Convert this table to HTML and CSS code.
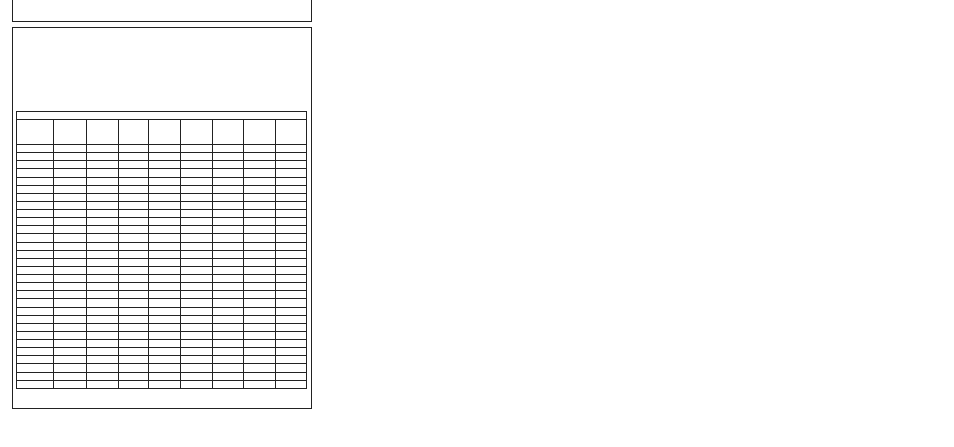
FILE: index.html
```html
<!DOCTYPE html>
<html lang="en">
<head>
<meta charset="utf-8">
<title>Form</title>
<link rel="stylesheet" href="styles.css">
</head>
<body>
<div class="page">
  <div class="box box-top"></div>
  <div class="box box-main">
    <div class="sheet">
      <div class="row row-caption"><div class="cell"></div></div>
      <div class="row row-head"><div class="cell"></div><div class="cell"></div><div class="cell"></div><div class="cell"></div><div class="cell"></div><div class="cell"></div><div class="cell"></div><div class="cell"></div><div class="cell"></div></div>
      <!-- 1 -->
      <div class="row"><div class="cell"></div><div class="cell"></div><div class="cell"></div><div class="cell"></div><div class="cell"></div><div class="cell"></div><div class="cell"></div><div class="cell"></div><div class="cell"></div></div>
      <!-- 2 -->
      <div class="row"><div class="cell"></div><div class="cell"></div><div class="cell"></div><div class="cell"></div><div class="cell"></div><div class="cell"></div><div class="cell"></div><div class="cell"></div><div class="cell"></div></div>
      <!-- 3 -->
      <div class="row"><div class="cell"></div><div class="cell"></div><div class="cell"></div><div class="cell"></div><div class="cell"></div><div class="cell"></div><div class="cell"></div><div class="cell"></div><div class="cell"></div></div>
      <!-- 4 -->
      <div class="row"><div class="cell"></div><div class="cell"></div><div class="cell"></div><div class="cell"></div><div class="cell"></div><div class="cell"></div><div class="cell"></div><div class="cell"></div><div class="cell"></div></div>
      <!-- 5 -->
      <div class="row"><div class="cell"></div><div class="cell"></div><div class="cell"></div><div class="cell"></div><div class="cell"></div><div class="cell"></div><div class="cell"></div><div class="cell"></div><div class="cell"></div></div>
      <!-- 6 -->
      <div class="row"><div class="cell"></div><div class="cell"></div><div class="cell"></div><div class="cell"></div><div class="cell"></div><div class="cell"></div><div class="cell"></div><div class="cell"></div><div class="cell"></div></div>
      <!-- 7 -->
      <div class="row"><div class="cell"></div><div class="cell"></div><div class="cell"></div><div class="cell"></div><div class="cell"></div><div class="cell"></div><div class="cell"></div><div class="cell"></div><div class="cell"></div></div>
      <!-- 8 -->
      <div class="row"><div class="cell"></div><div class="cell"></div><div class="cell"></div><div class="cell"></div><div class="cell"></div><div class="cell"></div><div class="cell"></div><div class="cell"></div><div class="cell"></div></div>
      <!-- 9 -->
      <div class="row"><div class="cell"></div><div class="cell"></div><div class="cell"></div><div class="cell"></div><div class="cell"></div><div class="cell"></div><div class="cell"></div><div class="cell"></div><div class="cell"></div></div>
      <!-- 10 -->
      <div class="row"><div class="cell"></div><div class="cell"></div><div class="cell"></div><div class="cell"></div><div class="cell"></div><div class="cell"></div><div class="cell"></div><div class="cell"></div><div class="cell"></div></div>
      <!-- 11 -->
      <div class="row"><div class="cell"></div><div class="cell"></div><div class="cell"></div><div class="cell"></div><div class="cell"></div><div class="cell"></div><div class="cell"></div><div class="cell"></div><div class="cell"></div></div>
      <!-- 12 -->
      <div class="row"><div class="cell"></div><div class="cell"></div><div class="cell"></div><div class="cell"></div><div class="cell"></div><div class="cell"></div><div class="cell"></div><div class="cell"></div><div class="cell"></div></div>
      <!-- 13 -->
      <div class="row"><div class="cell"></div><div class="cell"></div><div class="cell"></div><div class="cell"></div><div class="cell"></div><div class="cell"></div><div class="cell"></div><div class="cell"></div><div class="cell"></div></div>
      <!-- 14 -->
      <div class="row"><div class="cell"></div><div class="cell"></div><div class="cell"></div><div class="cell"></div><div class="cell"></div><div class="cell"></div><div class="cell"></div><div class="cell"></div><div class="cell"></div></div>
      <!-- 15 -->
      <div class="row"><div class="cell"></div><div class="cell"></div><div class="cell"></div><div class="cell"></div><div class="cell"></div><div class="cell"></div><div class="cell"></div><div class="cell"></div><div class="cell"></div></div>
      <!-- 16 -->
      <div class="row"><div class="cell"></div><div class="cell"></div><div class="cell"></div><div class="cell"></div><div class="cell"></div><div class="cell"></div><div class="cell"></div><div class="cell"></div><div class="cell"></div></div>
      <!-- 17 -->
      <div class="row"><div class="cell"></div><div class="cell"></div><div class="cell"></div><div class="cell"></div><div class="cell"></div><div class="cell"></div><div class="cell"></div><div class="cell"></div><div class="cell"></div></div>
      <!-- 18 -->
      <div class="row"><div class="cell"></div><div class="cell"></div><div class="cell"></div><div class="cell"></div><div class="cell"></div><div class="cell"></div><div class="cell"></div><div class="cell"></div><div class="cell"></div></div>
      <!-- 19 -->
      <div class="row"><div class="cell"></div><div class="cell"></div><div class="cell"></div><div class="cell"></div><div class="cell"></div><div class="cell"></div><div class="cell"></div><div class="cell"></div><div class="cell"></div></div>
      <!-- 20 -->
      <div class="row"><div class="cell"></div><div class="cell"></div><div class="cell"></div><div class="cell"></div><div class="cell"></div><div class="cell"></div><div class="cell"></div><div class="cell"></div><div class="cell"></div></div>
      <!-- 21 -->
      <div class="row"><div class="cell"></div><div class="cell"></div><div class="cell"></div><div class="cell"></div><div class="cell"></div><div class="cell"></div><div class="cell"></div><div class="cell"></div><div class="cell"></div></div>
      <!-- 22 -->
      <div class="row"><div class="cell"></div><div class="cell"></div><div class="cell"></div><div class="cell"></div><div class="cell"></div><div class="cell"></div><div class="cell"></div><div class="cell"></div><div class="cell"></div></div>
      <!-- 23 -->
      <div class="row"><div class="cell"></div><div class="cell"></div><div class="cell"></div><div class="cell"></div><div class="cell"></div><div class="cell"></div><div class="cell"></div><div class="cell"></div><div class="cell"></div></div>
      <!-- 24 -->
      <div class="row"><div class="cell"></div><div class="cell"></div><div class="cell"></div><div class="cell"></div><div class="cell"></div><div class="cell"></div><div class="cell"></div><div class="cell"></div><div class="cell"></div></div>
      <!-- 25 -->
      <div class="row"><div class="cell"></div><div class="cell"></div><div class="cell"></div><div class="cell"></div><div class="cell"></div><div class="cell"></div><div class="cell"></div><div class="cell"></div><div class="cell"></div></div>
      <!-- 26 -->
      <div class="row"><div class="cell"></div><div class="cell"></div><div class="cell"></div><div class="cell"></div><div class="cell"></div><div class="cell"></div><div class="cell"></div><div class="cell"></div><div class="cell"></div></div>
      <!-- 27 -->
      <div class="row"><div class="cell"></div><div class="cell"></div><div class="cell"></div><div class="cell"></div><div class="cell"></div><div class="cell"></div><div class="cell"></div><div class="cell"></div><div class="cell"></div></div>
      <!-- 28 -->
      <div class="row"><div class="cell"></div><div class="cell"></div><div class="cell"></div><div class="cell"></div><div class="cell"></div><div class="cell"></div><div class="cell"></div><div class="cell"></div><div class="cell"></div></div>
      <!-- 29 -->
      <div class="row"><div class="cell"></div><div class="cell"></div><div class="cell"></div><div class="cell"></div><div class="cell"></div><div class="cell"></div><div class="cell"></div><div class="cell"></div><div class="cell"></div></div>
      <!-- 30 -->
      <div class="row"><div class="cell"></div><div class="cell"></div><div class="cell"></div><div class="cell"></div><div class="cell"></div><div class="cell"></div><div class="cell"></div><div class="cell"></div><div class="cell"></div></div>
    </div>
  </div>
</div>
</body>
</html>
```

FILE: styles.css
```css
html, body {
  margin: 0;
  padding: 0;
  background: #ffffff;
  font-family: "Liberation Sans", Arial, sans-serif;
}

.page {
  padding-left: 12px;
}

.box {
  width: 300px;
  box-sizing: border-box;
  border: 1px solid #222222;
}

.box-top {
  height: 22px;
  border-top: none;
}

.box-main {
  margin-top: 5px;
  padding: 83px 4px 19px 3px;
}

.sheet {
  width: 291px;
  box-sizing: border-box;
  border-left: 1px solid #222222;
  border-top: 1px solid #222222;
  display: flex;
  flex-direction: column;
}

.row {
  display: grid;
  grid-template-columns: 37px 33px 32px 30px 32px 32px 31px 32px 31px;
  height: calc(244px / 30);
}

.row-caption {
  grid-template-columns: 1fr;
  height: 8px;
}

.row-head {
  height: 25px;
}

.cell {
  box-sizing: border-box;
  border-right: 1px solid #222222;
  border-bottom: 1px solid #222222;
}
```
